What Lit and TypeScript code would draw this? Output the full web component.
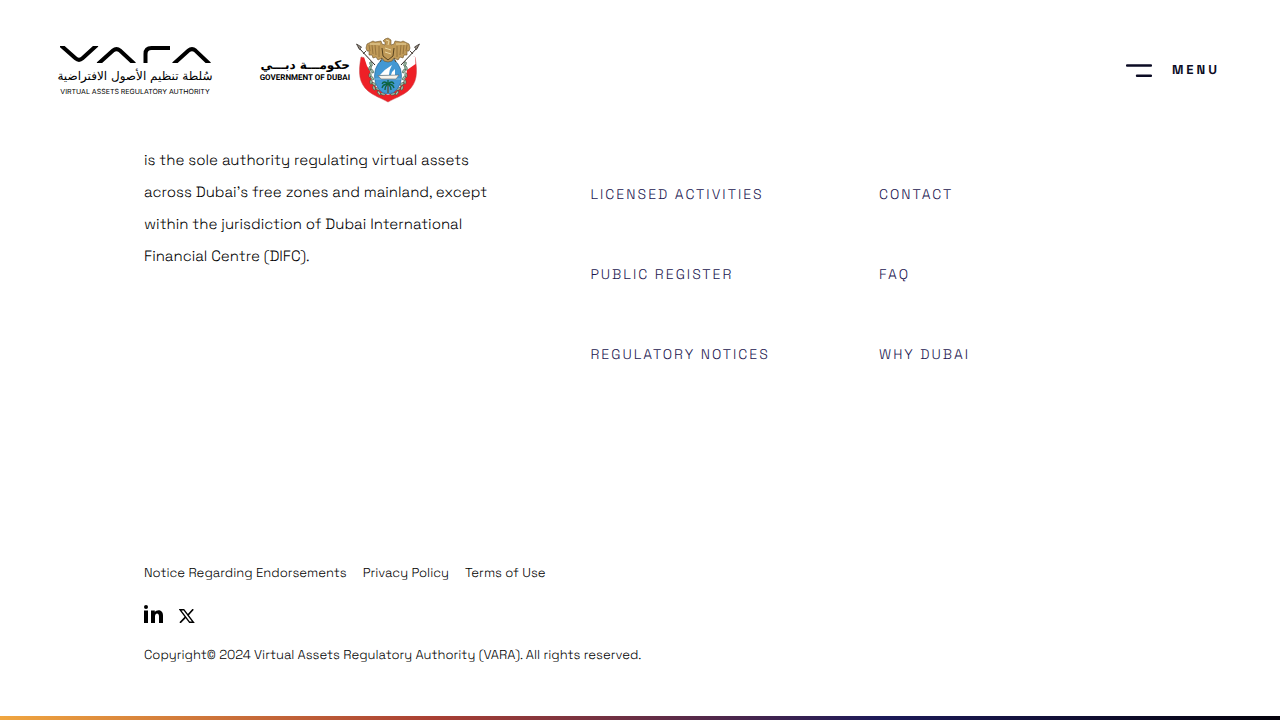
import { LitElement, html, css, svg } from "lit";
import { customElement } from "lit/decorators.js";

const leaves = (side: number) => {
  const spots = [
    [0, 27, 70], [-1, 31, 110], [1, 34, 60], [-1, 38, 100], [1, 41, 50],
    [0, 45, 90], [3, 47, 30], [3, 51, 70], [7, 52, 10], [8, 56, 50], [12, 57, 10],
  ];
  return spots.map(([x, y, r]) => {
    const cx = 33 + side * (17 - x);
    return svg`
      <ellipse cx=${cx} cy=${y} rx="2.3" ry="1.1" transform="rotate(${-side * r} ${cx} ${y})"
        fill="#a9c6b1" stroke="#33503d" stroke-width=".6"/>`;
  });
};

@customElement("vara-logo")
export class VaraLogo extends LitElement {
  static styles = css`
    :host { display: block; }
    svg { display: block; overflow: visible; }
    .mark { overflow: hidden; }
    .ar { font: 400 12px "DejaVu Sans", sans-serif; }
    .en { font: 400 7px Inter, "Noto Sans", sans-serif; }
  `;
  render() {
    return html`
      <svg width="152" height="52" viewBox="0 0 152 52" role="img" aria-label="VARA">
        <svg class="mark" x="0" y="2" width="152" height="17" viewBox="0 0 152 17">
          <g fill="none" stroke="#000" stroke-width="4">
            <path d="M.500 -1 L15.500 12.300 Q19 15.400 22.500 12.300 L37 -1"/>
            <path d="M38 18 L53 4.600 Q56.500 1.500 60 4.600 L74.500 18"/>
            <path d="M85.500 17 V8 Q85.500 2 91.500 2 H110"/>
            <path d="M113.500 18 L128.500 4.600 Q132 1.500 135.500 4.600 L149.500 18"/>
          </g>
        </svg>
        <text class="ar" x="75" y="36" text-anchor="middle" direction="rtl">سُلطة تنظيم الأصول الافتراضية</text>
        <text class="en" x="75" y="50" text-anchor="middle">VIRTUAL ASSETS REGULATORY AUTHORITY</text>
      </svg>`;
  }
}

@customElement("dubai-logo")
export class DubaiLogo extends LitElement {
  static styles = css`
    :host { display: flex; align-items: center; gap: 5px; }
    .words { display: flex; flex-direction: column; align-items: flex-end; width: 90px; padding-top: 2px; white-space: nowrap; }
    .ar { font: 700 12px/14px "DejaVu Sans", sans-serif; }
    .en { font: 700 8px/12px Roboto, "Noto Sans", sans-serif; }
    svg { display: block; }
  `;
  render() {
    return html`
      <div class="words">
        <span class="ar" lang="ar" dir="rtl">حكومـــة دبـــي</span>
        <span class="en">GOVERNMENT OF DUBAI</span>
      </div>
      <svg width="65" height="66" viewBox="0 0 65 66" role="img" aria-label="Emblem of Dubai">
        <path d="M6 20 Q12 22 18 17 H48 Q54 22 60 20 C63 36 62 46 53 54 C47 59 40 61 33 65 C26 61 19 59 13 54 C4 46 3 36 6 20Z" fill="#ee2027" stroke="#c9464b" stroke-width=".5"/>
        <path d="M9 20 Q14 20 18 16 H48 Q52 20 60 20 L60.500 27 L52 33 Q51 50 33 58 Q15 50 15 34 L12 29Z" fill="#fff"/>
        <path d="M3 10 L20 28 M63 10 L46 28" stroke="#2b2521" stroke-width="1"/>
        <path d="M1.500 7 L6.500 10 L4.500 12.500Z M64.500 7 L59.500 10 L61.500 12.500Z" fill="#9a9188" stroke="#39322c" stroke-width=".8"/>
        <path d="M8 17 L11 14 M58 17 L55 14" stroke="#55483b" stroke-width="1"/>
        ${leaves(-1)}${leaves(1)}
        <ellipse cx="33" cy="39" rx="13.500" ry="18" fill="#4298d3" stroke="#2c6b99" stroke-width=".7"/>
        <path d="M20 42 H46" stroke="#8dc3e5" stroke-width=".8"/>
        <path d="M25 38 Q30 32 37 28 Q34 33 34 38Z M36 38 Q37 34 40 32 L40 38Z" fill="#fff"/>
        <path d="M23 38.500 L44 38 L41 42 H26Z" fill="#f8f4ec" stroke="#5e6669" stroke-width=".6"/>
        <path d="M33 47 V56" stroke="#5b4a28" stroke-width="1.200"/>
        <path d="M33 47 Q29 43 27 47 M33 47 Q28 47 27 51 M33 47 Q30 49 30 53 M33 47 Q37 43 39 47 M33 47 Q38 47 39 51 M33 47 Q36 49 36 53 M33 47 V43" fill="none" stroke="#0f6440" stroke-width="1.300"/>
        <path d="M30 8 L27 7 L26 4 L20 5 L18 4 L12 7 L11 11 L12 14 L14 14 L14 18 L17 18 L18 21 L21 20 L23 23 L27 21 L29 24 L33 25 L37 24 L39 21 L43 23 L45 20 L48 21 L49 18 L52 18 L52 14 L54 14 L55 11 L54 7 L48 4 L46 5 L40 4 L39 7 L36 8 L36 3 L33 1 L30 2 L28 4 L30 5Z" fill="#c09a58" stroke="#6b5228" stroke-width=".6"/>
        <path d="M14 8 L15 14 M17 8 L18 17 M20 8 L21 18 M24 9 L24 20 M52 8 L51 14 M49 8 L48 17 M46 8 L45 18 M42 9 L42 20" fill="none" stroke="#8a6a36" stroke-width=".8"/>
        <path d="M15 7 L25 7 M41 7 L51 7 M31 3 L34 4 L33 8 M30 11 L36 13 M30 15 L36 17" fill="none" stroke="#ead7a2" stroke-width="1"/>
        <path d="M27 11 L28 19 L33 23 L38 19 L39 11 M27 21 L25 25 M39 21 L41 25" fill="none" stroke="#4a3819" stroke-width=".9"/>
      </svg>`;
  }
}

@customElement("app-root")
export class AppRoot extends LitElement {
  static styles = css`
    :host {
      display: flex;
      flex-direction: column;
      min-height: 100vh;
      background: #fff;
      color: #000;
      font-family: "Space Grotesk", Inter, sans-serif;
      font-weight: 300;
      text-rendering: geometricPrecision;
    }
    a { color: inherit; text-decoration: none; }
    header {
      display: flex;
      align-items: center;
      justify-content: space-between;
      height: 140px;
      padding: 0 60px;
    }
    .brands { display: flex; align-items: center; gap: 48px; }
    .menu {
      display: flex;
      align-items: center;
      gap: 20px;
      padding: 0;
      border: 0;
      background: none;
      color: #0b0b24;
      font: 600 13px/20px "Space Grotesk", Inter, sans-serif;
      letter-spacing: 3px;
      text-rendering: inherit;
      cursor: pointer;
    }
    main {
      display: grid;
      grid-template-columns: 45% 29.1% 1fr;
      padding: 5px 144px 0;
      flex: 1;
    }
    .about { margin: 0; max-width: 352px; font-size: 15px; line-height: 32px; }
    .links {
      display: flex;
      flex-direction: column;
      gap: 48px;
      margin: 0;
      padding: 34px 0 0;
      list-style: none;
      color: #1b164f;
      font-size: 14px;
      line-height: 32px;
      letter-spacing: 2px;
    }
    footer { padding: 0 144px 49px; font-size: 13px; line-height: 24px; }
    .legal { display: flex; gap: 16px; }
    .social { display: flex; align-items: flex-end; gap: 15px; padding: 20px 0; }
    .social svg { display: block; }
    .copy { margin: 0; }
    .bar { height: 4px; background: linear-gradient(90deg, #f0a640, #a93f33 34%, #1c1a59 69%, #04020b); }
  `;

  private column(items: string[]) {
    return html`<ul class="links">${items.map((t) => html`<li><a href="#">${t}</a></li>`)}</ul>`;
  }

  render() {
    return html`
      <header>
        <div class="brands">
          <vara-logo></vara-logo>
          <dubai-logo></dubai-logo>
        </div>
        <button class="menu" type="button">
          <svg width="26" height="14" viewBox="0 0 26 14" aria-hidden="true">
            <path d="M1 2.500 H25 M11 12.700 H25" stroke="#0b0b24" stroke-width="2.400" stroke-linecap="round"/>
          </svg>
          MENU
        </button>
      </header>
      <main>
        <p class="about">is the sole authority regulating virtual assets across Dubai’s free zones and mainland, except within the jurisdiction of Dubai International Financial Centre (DIFC).</p>
        ${this.column(["LICENSED ACTIVITIES", "PUBLIC REGISTER", "REGULATORY NOTICES"])}
        ${this.column(["CONTACT", "FAQ", "WHY DUBAI"])}
      </main>
      <footer>
        <nav class="legal">
          <a href="#">Notice Regarding Endorsements</a>
          <a href="#">Privacy Policy</a>
          <a href="#">Terms of Use</a>
        </nav>
        <div class="social">
          <a href="#" aria-label="LinkedIn">
            <svg width="20" height="18" viewBox="0 0 20 18">
              <circle cx="2" cy="2" r="2"/>
              <path d="M0 5.500 H4 V18 H0Z M7 5.500 H10.800 V7.200 C12.500 4.400 19 4.200 19 10.500 V18 H15 V11.500 C15 7.500 11 7.800 11 11.500 V18 H7Z"/>
            </svg>
          </a>
          <a href="#" aria-label="X">
            <svg width="16" height="14" viewBox="0 0 16 14">
              <path d="M1 .7 H4.800 L14.400 13.300 H10.600Z" fill="none" stroke="#000" stroke-width="1.400"/>
              <path d="M14.200 .3 L8.800 6.200 M6.500 8.200 L1 13.800" stroke="#000" stroke-width="1.700"/>
            </svg>
          </a>
        </div>
        <p class="copy">Copyright© 2024 Virtual Assets Regulatory Authority (VARA). All rights reserved.</p>
      </footer>
      <div class="bar"></div>`;
  }
}
